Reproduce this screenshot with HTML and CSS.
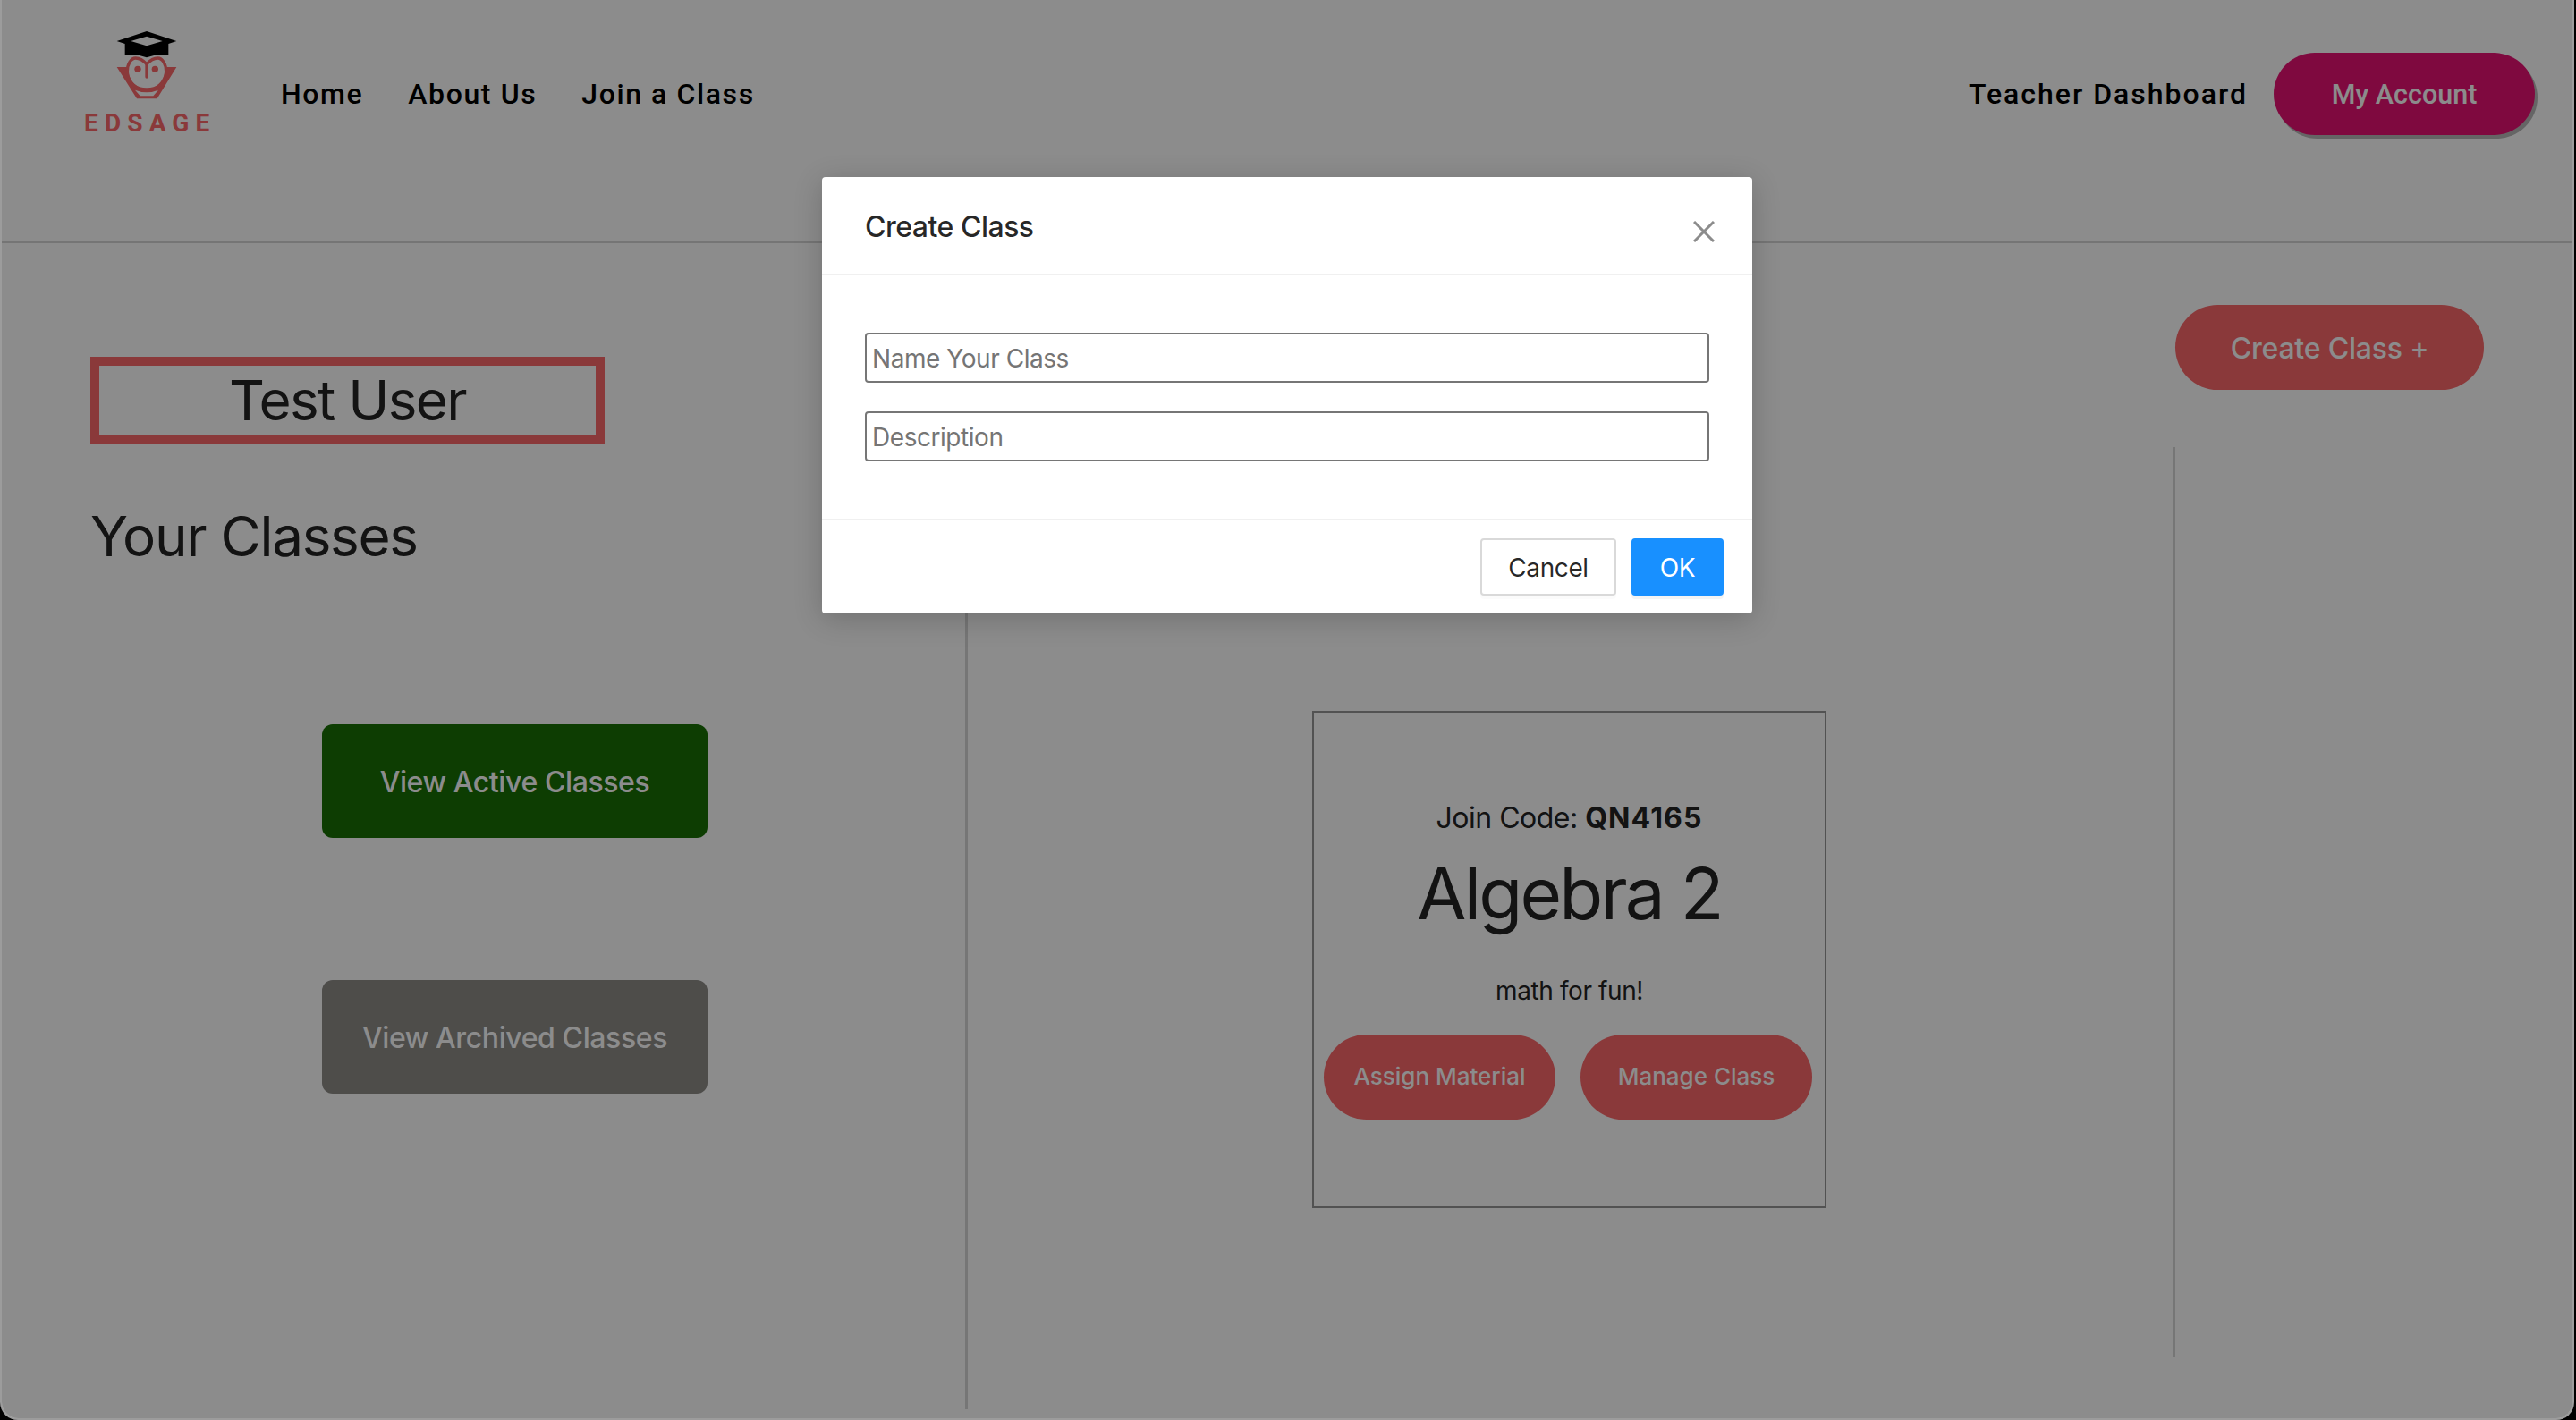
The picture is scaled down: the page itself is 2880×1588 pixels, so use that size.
FILE: index.html
```html
<!DOCTYPE html>
<html lang="en">
<head>
<meta charset="utf-8">
<title>EdSage - Teacher Dashboard</title>
<link rel="stylesheet" href="styles.css">
</head>
<body>
<div class="window">
  <header class="topbar">
    <a class="logo" href="#" aria-label="EdSage">
      <svg class="logo-art" viewBox="0 0 600 510" width="200" height="170">
        <path class="cap" d="M215 138L315 105L415 138L388 147V184Q350 180 315 193Q280 180 242 184V147Z"/>
        <path class="cap-top" d="M262 138L315 122L368 138L315 154Z"/>
        <path class="collar" fill-rule="evenodd" d="M215 225H252C254 270 280 298 315 298C350 298 376 270 378 225H415L350 331H282ZM276 302L293 322H337L354 302Q315 318 276 302Z"/>
        <path class="head" d="M315 215C303 202 290 195 278 195C262 195 250 215 250 240C250 280 282 300 315 300C348 300 380 280 380 240C380 215 368 195 352 195C340 195 327 202 315 215Z"/>
        <path class="nose" d="M315 215V258"/>
        <circle class="eye" cx="285" cy="232" r="11"/>
        <circle class="eye" cx="343" cy="232" r="11"/>
        <text class="logo-word" x="105" y="441" textLength="421">EDSAGE</text>
      </svg>
    </a>
    <nav class="nav">
      <a href="#">Home</a>
      <a href="#">About Us</a>
      <a href="#">Join a Class</a>
    </nav>
    <div class="account">
      <a class="nav-link" href="#">Teacher Dashboard</a>
      <button class="account-btn">My Account</button>
    </div>
  </header>
  <main class="dashboard">
    <section class="side">
      <h1 class="user-name">Test User</h1>
      <h2 class="section-title">Your Classes</h2>
      <button class="filter-btn active">View Active Classes</button>
      <button class="filter-btn archived">View Archived Classes</button>
    </section>
    <section class="classes">
      <article class="class-card">
        <p class="join-code">Join Code: <b>QN4165</b></p>
        <h3 class="class-name">Algebra 2</h3>
        <p class="class-desc">math for fun!</p>
        <div class="card-actions">
          <button class="pill small">Assign Material</button>
          <button class="pill small">Manage Class</button>
        </div>
      </article>
    </section>
    <aside class="tools">
      <button class="pill create">Create Class +</button>
      <div class="rail"></div>
    </aside>
  </main>
  <div class="mask">
    <div class="modal">
      <div class="modal-head">
        <span class="modal-title">Create Class</span>
        <svg class="modal-close" viewBox="0 0 24 24" width="24" height="24"><path d="M1 1L23 23M23 1L1 23"/></svg>
      </div>
      <div class="modal-body">
        <input class="field" type="text" placeholder="Name Your Class">
        <input class="field" type="text" placeholder="Description">
      </div>
      <div class="modal-foot">
        <button class="btn">Cancel</button>
        <button class="btn primary">OK</button>
      </div>
    </div>
  </div>
</div>
</body>
</html>
```

FILE: styles.css
```css
* { box-sizing: border-box; }
html, body { margin: 0; height: 100%; }
body { background: #000; font-family: Inter, "Liberation Sans", sans-serif; color: #242424; overflow: hidden; }
a { color: inherit; text-decoration: none; }
button { font-family: inherit; border: 0; cursor: pointer; }
h1, h2, h3, p { margin: 0; font-weight: 400; }

.window { position: relative; width: 2878px; height: 1588px; background: #fff; border: 2px solid #9c9c9c; border-top: 0; border-radius: 0 0 20px 20px; overflow: hidden; }

.topbar { display: flex; align-items: flex-start; height: 272px; padding: 0 42px 0 57px; border-bottom: 2px solid #d6d6d6; }
.logo { display: block; height: 170px; }
.logo-art { display: block; }
.cap { fill: #000; }
.cap-top { fill: #fff; }
.collar { fill: #fc686b; }
.head, .nose { fill: none; stroke: #fc686b; stroke-width: 10; stroke-linecap: round; }
.eye { fill: #fc686b; }
.logo-word { font-family: Roboto, sans-serif; font-weight: 700; font-size: 84px; fill: #fc686b; }

.nav, .account { display: flex; align-items: center; height: 92px; margin-top: 59px; font-family: Roboto, sans-serif; font-weight: 500; font-size: 32px; letter-spacing: 2px; color: #000; }
.nav { gap: 50px; margin-left: 55px; letter-spacing: 1.6px; }
.account { margin-left: auto; gap: 29px; }
.account-btn { width: 292px; height: 92px; border-radius: 46px; background: #e71274; color: #fff; font-family: Roboto, sans-serif; font-weight: 500; font-size: 30.5px; box-shadow: 3px 4px 0 #b9b9b9; }

.dashboard { display: flex; align-items: flex-start; }
.side { width: 1080px; height: 1304px; padding: 127px 0 0 99px; border-right: 3px solid #d8d8d8; }
.user-name { width: 575px; height: 97px; border: 10px solid #fc686b; font-size: 62px; line-height: 78px; letter-spacing: -1.7px; text-align: center; }
.section-title { margin: 65px 0 172px; font-size: 62px; line-height: 77px; letter-spacing: -1.3px; }
.filter-btn { display: block; width: 431px; height: 127px; margin-left: 259px; padding-top: 3px; border-radius: 12px; color: #fff; font-size: 32px; font-weight: 500; letter-spacing: -.4px; }
.filter-btn.active { background: #196f05; }
.filter-btn.archived { margin-top: 159px; background: #8e8c88; }

.classes { width: 1347px; padding: 523px 2px 0 0; display: flex; justify-content: center; }
.class-card { width: 575px; height: 556px; padding: 96px 0 0; border: 2px solid #959595; text-align: center; }
.join-code { font-size: 32px; line-height: 44px; letter-spacing: -.5px; }
.join-code b { font-weight: 700; letter-spacing: 1.1px; }
.class-name { margin-top: 13px; font-size: 80px; line-height: 97px; letter-spacing: -2.8px; }
.class-desc { margin-top: 41px; font-size: 28px; line-height: 40px; letter-spacing: -.4px; }
.card-actions { display: flex; justify-content: center; gap: 28px; margin-top: 29px; padding-right: 3px; }

.pill { background: #fc686b; color: #fff; border-radius: 48px; font-weight: 500; }
.pill.small { width: 259px; height: 95px; padding-bottom: 4px; font-size: 26px; }
.tools { flex: 1; display: flex; flex-direction: column; }
.pill.create { width: 345px; height: 95px; margin: 69px 0 0 3px; padding-top: 2px; font-size: 32px; letter-spacing: -.2px; }
.rail { width: 3px; height: 1018px; margin-top: 64px; background: #d8d8d8; }

.mask { position: absolute; inset: 0; display: flex; justify-content: center; align-items: flex-start; padding-top: 198px; background: rgba(0,0,0,.45); }
.modal { width: 1040px; height: 488px; background: #fff; border-radius: 4px; box-shadow: 0 6px 32px rgba(0,0,0,.2); display: flex; flex-direction: column; color: #000000d9; }
.modal-head { display: flex; justify-content: space-between; height: 110px; padding: 34px 42px 0 48px; border-bottom: 2px solid #f0f0f0; }
.modal-title { font-size: 32px; line-height: 44px; font-weight: 500; letter-spacing: -.5px; }
.modal-close { margin-top: 15px; fill: none; stroke: #8c8c8c; stroke-width: 3; }
.modal-body { flex: 1; display: flex; flex-direction: column; gap: 32px; padding: 64px 48px 0 48px; }
.field { height: 56px; padding: 3px 6px 1px; border: 2px solid #767676; border-radius: 4px; font-family: inherit; font-size: 28px; letter-spacing: -.45px; color: #000; background: #fff; }
.field::placeholder { color: #757575; opacity: 1; }
.modal-foot { display: flex; justify-content: flex-end; gap: 17px; height: 106px; padding: 20px 32px 0 0; border-top: 2px solid #f0f0f0; }
.btn { width: 152px; height: 64px; padding-top: 2px; border: 2px solid #d9d9d9; border-radius: 4px; background: #fff; color: #000000d9; font-size: 28px; letter-spacing: -.4px; box-shadow: 0 4px 0 rgba(0,0,0,.015); }
.btn.primary { width: 103px; background: #1890ff; border-color: #1890ff; color: #fff; box-shadow: 0 4px 0 rgba(0,0,0,.045); }
```
